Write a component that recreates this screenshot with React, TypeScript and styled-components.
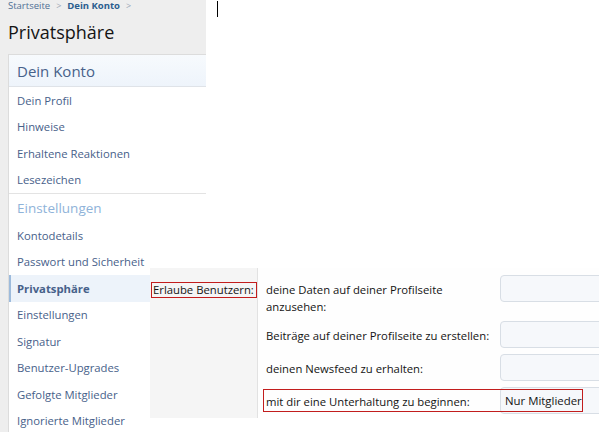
import React from "react";
import styled, { createGlobalStyle } from "styled-components";

const GlobalStyle = createGlobalStyle`
  html, body {
    margin: 0;
    padding: 0;
    background: #fff;
  }
  body {
    font-family: "Open Sans", "Noto Sans", Arial, sans-serif;
    color: #141414;
  }
`;

type NavItem = { label: string; active?: boolean };

const accountLinks: NavItem[] = [
  { label: "Dein Profil" },
  { label: "Hinweise" },
  { label: "Erhaltene Reaktionen" },
  { label: "Lesezeichen" },
];

const settingsLinks: NavItem[] = [
  { label: "Kontodetails" },
  { label: "Passwort und Sicherheit" },
  { label: "Privatsphäre", active: true },
  { label: "Einstellungen" },
  { label: "Signatur" },
  { label: "Benutzer-Upgrades" },
  { label: "Gefolgte Mitglieder" },
  { label: "Ignorierte Mitglieder" },
];

const privacyRows = [
  { label: "deine Daten auf deiner Profilseite\nanzusehen:", value: "" },
  { label: "Beiträge auf deiner Profilseite zu erstellen:", value: "" },
  { label: "deinen Newsfeed zu erhalten:", value: "" },
  { label: "mit dir eine Unterhaltung zu beginnen:", value: "Nur Mitglieder", marked: true },
];

const App: React.FC = () => {
  return (
    <>
      <GlobalStyle />
      <Page>
        <LeftColumn>
          <Breadcrumb>
            <Crumb>Startseite</Crumb>
            <Chevron>&gt;</Chevron>
            <Crumb $strong>Dein Konto</Crumb>
            <Chevron>&gt;</Chevron>
          </Breadcrumb>
          <Title>Privatsphäre</Title>
          <Card>
            <CardHeader>Dein Konto</CardHeader>
            <NavList>
              {accountLinks.map((item) => (
                <NavLink key={item.label}>{item.label}</NavLink>
              ))}
            </NavList>
            <SectionHeading>Einstellungen</SectionHeading>
            <NavList>
              {settingsLinks.map((item) => (
                <NavLink key={item.label} $active={item.active}>
                  {item.label}
                </NavLink>
              ))}
            </NavList>
          </Card>
        </LeftColumn>
        <RightColumn>
          <Caret />
        </RightColumn>

        {/* pasted form fragment lying over the sidebar */}
        <FormPanel>
          <LabelCol>
            <MarkedLabel>Erlaube Benutzern:</MarkedLabel>
          </LabelCol>
          <FieldCol>
            {privacyRows.map((row) => (
              <FieldRow key={row.label}>
                <FieldLabel>{row.label}</FieldLabel>
                <SelectBox>{row.value}</SelectBox>
                {row.marked && <RedFrame />}
              </FieldRow>
            ))}
          </FieldCol>
        </FormPanel>
      </Page>
    </>
  );
};

export default App;

// Styled components
const Page = styled.div`
  position: relative;
  width: 599px;
  height: 432px;
  overflow: hidden;
  display: grid;
  grid-template-columns: 206px 1fr;
`;

const LeftColumn = styled.div`
  background: #eeeeee;
  padding: 0 0 0 8px;
  overflow: hidden;
`;

const Breadcrumb = styled.div`
  display: flex;
  align-items: center;
  gap: 6px;
  height: 12px;
  font-size: 9.5px;
  line-height: 12px;
`;

const Crumb = styled.span<{ $strong?: boolean }>`
  color: ${(p) => (p.$strong ? "#2b5d8f" : "#4f6f94")};
  font-weight: ${(p) => (p.$strong ? 700 : 400)};
`;

const Chevron = styled.span`
  color: #9aa7b5;
  font-size: 9px;
`;

const Title = styled.h1`
  margin: 9px 0 0;
  font-size: 18px;
  font-weight: 400;
  line-height: 22px;
  color: #141414;
`;

const Card = styled.div`
  margin-top: 11px;
  width: 240px;
  background: #fff;
  border: 1px solid #dcdcdc;
  border-right: none;
`;

const CardHeader = styled.div`
  height: 31px;
  padding: 0 8px;
  display: flex;
  align-items: center;
  font-size: 15px;
  color: #47618a;
  background: linear-gradient(to bottom, #f7fafd, #eef4fb);
  border-bottom: 1px solid #dfe3e8;
`;

const NavList = styled.div`
  display: flex;
  flex-direction: column;
`;

const NavLink = styled.div<{ $active?: boolean }>`
  height: 26.5px;
  display: flex;
  align-items: center;
  padding-left: ${(p) => (p.$active ? "6px" : "8px")};
  font-size: 11.3px;
  color: #47618a;
  font-weight: ${(p) => (p.$active ? 700 : 400)};
  background: ${(p) => (p.$active ? "#edf3fa" : "transparent")};
  border-left: ${(p) => (p.$active ? "2px solid #9dbbdc" : "none")};
`;

const SectionHeading = styled.div`
  height: 28px;
  padding: 0 8px;
  display: flex;
  align-items: center;
  font-size: 13.5px;
  color: #8fb3d9;
  border-top: 1px solid #e3e3e3;
  margin-right: 34px;
`;

const RightColumn = styled.div`
  padding: 1px 0 0 11px;
`;

const Caret = styled.div`
  width: 1px;
  height: 16px;
  background: #000;
`;

const FormPanel = styled.div`
  position: absolute;
  left: 150px;
  top: 268px;
  width: 560px;
  display: flex;
  align-items: flex-start;
`;

const LabelCol = styled.div`
  flex: none;
  width: 108px;
  height: 150px;
  box-sizing: border-box;
  padding: 9px 0 0 1px;
  background: #f5f5f5;
  border-right: 1px solid #e2e2e2;
`;

const MarkedLabel = styled.span`
  display: inline-block;
  white-space: nowrap;
  padding: 0 2px 0 1px;
  font-size: 11.3px;
  line-height: 14px;
  color: #141414;
  border: 1px solid #c21d1d;
`;

const FieldCol = styled.div`
  flex: 1;
  background: #fefefe;
  padding: 7px 0 0 8px;
  display: flex;
  flex-direction: column;
  gap: 6px;
`;

const FieldRow = styled.div`
  position: relative;
  display: grid;
  grid-template-columns: 234px 150px;
  align-items: start;
`;

const FieldLabel = styled.div`
  padding: 6px 2px 0 0;
  font-size: 11.3px;
  line-height: 17px;
  white-space: pre-line;
  color: #141414;
`;

const SelectBox = styled.div`
  height: 27px;
  box-sizing: border-box;
  padding: 0 4px;
  display: flex;
  align-items: center;
  font-size: 11.4px;
  color: #141414;
  background: #f6f8fb;
  border: 1px solid #d8dee5;
  border-radius: 4px;
`;

const RedFrame = styled.div`
  position: absolute;
  left: -3px;
  top: 2px;
  width: 320px;
  height: 23px;
  box-sizing: border-box;
  border: 1px solid #c21d1d;
  pointer-events: none;
`;
